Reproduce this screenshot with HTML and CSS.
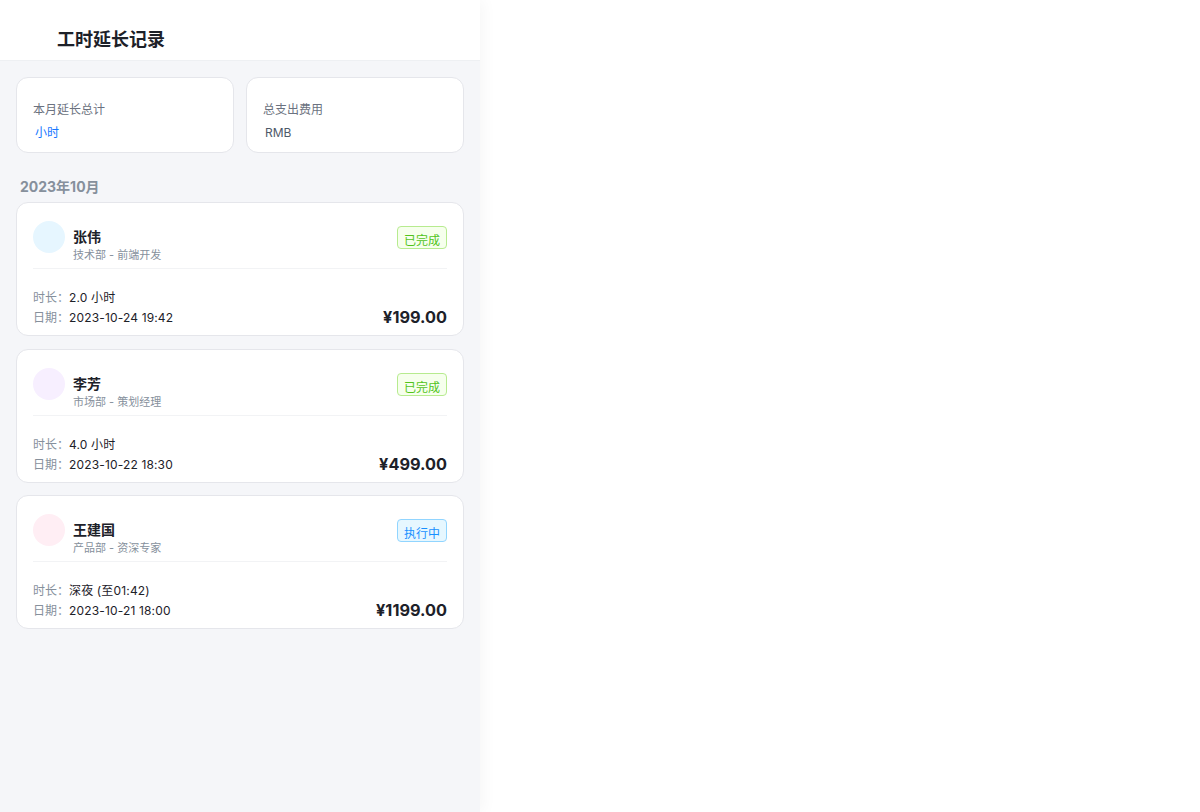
FILE: index.html
```html
<!DOCTYPE html>
<html lang="zh-CN">
<head>
<meta charset="utf-8">
<title>工时延长记录</title>
<link rel="stylesheet" href="styles.css">
</head>
<body>
<div class="app">
  <div class="panel">
    <header class="nav">
      <h1 class="nav-title">工时延长记录</h1>
    </header>

    <section class="summary">
      <div class="stat">
        <div class="stat-label">本月延长总计</div>
        <div class="stat-value blue"><span class="num"></span><span class="unit">小时</span></div>
      </div>
      <div class="stat">
        <div class="stat-label">总支出费用</div>
        <div class="stat-value"><span class="num"></span><span class="unit">RMB</span></div>
      </div>
    </section>

    <h2 class="month">2023年10月</h2>

    <div class="list">
      <div class="card">
        <div class="card-head">
          <div class="avatar av-blue"></div>
          <div class="person">
            <div class="name">张伟</div>
            <div class="dept">技术部 - 前端开发</div>
          </div>
          <div class="badge done">已完成</div>
        </div>
        <div class="card-body">
          <div class="meta">
            <div class="row"><span class="k">时长：</span><span class="v">2.0 小时</span></div>
            <div class="row"><span class="k">日期：</span><span class="v">2023-10-24 19:42</span></div>
          </div>
          <div class="amount">¥199.00</div>
        </div>
      </div>

      <div class="card">
        <div class="card-head">
          <div class="avatar av-purple"></div>
          <div class="person">
            <div class="name">李芳</div>
            <div class="dept">市场部 - 策划经理</div>
          </div>
          <div class="badge done">已完成</div>
        </div>
        <div class="card-body">
          <div class="meta">
            <div class="row"><span class="k">时长：</span><span class="v">4.0 小时</span></div>
            <div class="row"><span class="k">日期：</span><span class="v">2023-10-22 18:30</span></div>
          </div>
          <div class="amount">¥499.00</div>
        </div>
      </div>

      <div class="card">
        <div class="card-head">
          <div class="avatar av-pink"></div>
          <div class="person">
            <div class="name">王建国</div>
            <div class="dept">产品部 - 资深专家</div>
          </div>
          <div class="badge running">执行中</div>
        </div>
        <div class="card-body">
          <div class="meta">
            <div class="row"><span class="k">时长：</span><span class="v">深夜 (至01:42)</span></div>
            <div class="row"><span class="k">日期：</span><span class="v">2023-10-21 18:00</span></div>
          </div>
          <div class="amount">¥1199.00</div>
        </div>
      </div>
    </div>
  </div>
  <div class="stage"></div>
</div>
</body>
</html>
```

FILE: styles.css
```css
* { box-sizing: border-box; }

html, body {
  margin: 0;
  padding: 0;
  background: #ffffff;
}

body {
  font-family: "Inter", "Noto Sans CJK SC", sans-serif;
  color: #1d2129;
  -webkit-font-smoothing: antialiased;
}

.app {
  display: flex;
  min-height: 812px;
}

.panel {
  width: 480px;
  flex: 0 0 480px;
  min-height: 812px;
  background: #f5f6f9;
  box-shadow: 4px 0 14px rgba(0, 0, 0, 0.035);
  position: relative;
  z-index: 1;
}

.stage {
  flex: 1;
  background: #ffffff;
}

/* header */
.nav {
  height: 61px;
  background: #ffffff;
  border-bottom: 1px solid #eef0f3;
  padding: 28px 0 0 57px;
}

.nav-title {
  margin: 0;
  font-size: 18px;
  line-height: 24px;
  font-weight: 700;
  color: #1d2129;
}

/* summary */
.summary {
  display: grid;
  grid-template-columns: 1fr 1fr;
  gap: 12px;
  padding: 16px 16px 0;
}

.stat {
  height: 76px;
  background: #ffffff;
  border: 1px solid #e5e6eb;
  border-radius: 12px;
  padding: 23px 16px 0;
}

.stat-label {
  font-size: 12px;
  line-height: 18px;
  color: #6b7280;
}

.stat-value {
  margin-top: 4px;
  font-size: 12px;
  line-height: 20px;
  color: #4e5969;
}

.stat-value.blue { color: #1677ff; }

.stat-value .unit { margin-left: 2px; }

/* month */
.month {
  margin: 24px 0 0;
  padding: 0 20px;
  font-size: 14px;
  line-height: 20px;
  font-weight: 700;
  color: #86909c;
}

/* list */
.list {
  padding: 5px 16px 0;
  display: flex;
  flex-direction: column;
  gap: 12.5px;
}

.card {
  background: #ffffff;
  border: 1px solid #e5e6eb;
  border-radius: 12px;
  padding: 18px 16px 7px;
}

.card-head {
  display: flex;
  align-items: flex-start;
  padding-bottom: 5px;
  border-bottom: 1px solid #f2f3f5;
}

.avatar {
  width: 32px;
  height: 32px;
  border-radius: 50%;
  flex: 0 0 32px;
}

.av-blue { background: #e6f6ff; }
.av-purple { background: #f7efff; }
.av-pink { background: #ffeef4; }

.person {
  flex: 1;
  margin: 6px 0 0 8px;
}

.name {
  font-size: 14px;
  line-height: 20px;
  font-weight: 700;
  color: #1d2129;
}

.dept {
  font-size: 11px;
  line-height: 16px;
  color: #86909c;
}

.badge {
  margin-top: 5px;
  height: 23px;
  padding: 7px 6px 0;
  font-size: 12px;
  line-height: 14px;
  border-radius: 4px;
  border: 1px solid;
  overflow: hidden;
  white-space: nowrap;
}

.badge.done {
  background: #f6ffed;
  border-color: #b7eb8f;
  color: #52c41a;
}

.badge.running {
  background: #e6f7ff;
  border-color: #91d5ff;
  color: #1890ff;
}

.card-body {
  display: flex;
  justify-content: space-between;
  align-items: flex-end;
  padding-top: 19px;
}

.row {
  font-size: 12px;
  line-height: 20px;
}

.row .k { color: #86909c; }
.row .v { color: #1d2129; letter-spacing: 0.15px; }

.amount {
  font-size: 16.3px;
  line-height: 22px;
  font-weight: 700;
  color: #1d2129;
}
```
